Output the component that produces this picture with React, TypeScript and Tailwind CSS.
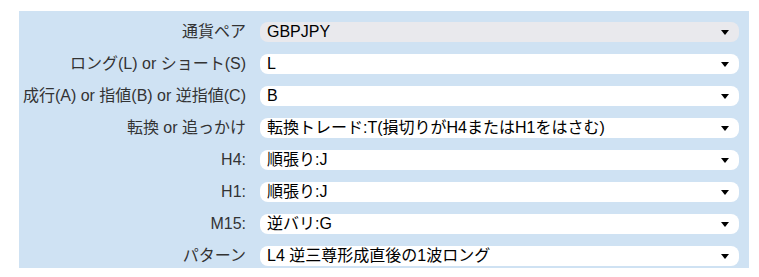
import { ChangeEvent, useState } from 'react'

type Field = {
  label: string
  value: string
  disabled?: boolean
}

const initialFields: Field[] = [
  { label: '通貨ペア', value: 'GBPJPY', disabled: true },
  { label: 'ロング(L) or ショート(S)', value: 'L' },
  { label: '成行(A) or 指値(B) or 逆指値(C)', value: 'B' },
  { label: '転換 or 追っかけ', value: '転換トレード:T(損切りがH4またはH1をはさむ)' },
  { label: 'H4:', value: '順張り:J' },
  { label: 'H1:', value: '順張り:J' },
  { label: 'M15:', value: '逆バリ:G' },
  { label: 'パターン', value: 'L4 逆三尊形成直後の1波ロング' },
]

function Arrow() {
  return (
    <svg width="8" height="5" viewBox="0 0 8 5" className="pointer-events-none">
      <path d="M0 0 H8 L4 5 Z" fill="#000" />
    </svg>
  )
}

function SelectRow({ field, onChange }: { field: Field; onChange: (v: string) => void }) {
  return (
    <div className="flex h-5 items-center">
      <label className="w-[227px] shrink-0 whitespace-nowrap text-right text-[#333]">
        {field.label}
      </label>
      <div
        className={
          field.disabled
            ? 'relative ml-[14px] flex h-5 flex-1 items-center rounded-lg bg-[#e9e9ed] pl-[7px] pr-[10px]'
            : 'relative ml-[14px] flex h-5 flex-1 items-center rounded-lg bg-white pl-[7px] pr-[10px]'
        }
      >
        <select
          value={field.value}
          disabled={field.disabled}
          onChange={(e: ChangeEvent<HTMLSelectElement>) => onChange(e.target.value)}
          className="absolute inset-0 cursor-pointer appearance-none opacity-0"
        >
          <option value={field.value}>{field.value}</option>
        </select>
        <span className="flex-1 truncate text-black">{field.value}</span>
        <Arrow />
      </div>
    </div>
  )
}

export default function App() {
  const [fields, setFields] = useState(initialFields)

  return (
    <div
      className="min-h-screen bg-white pl-[19px] pr-[10px] pt-[11px] text-base leading-5"
      style={{ fontFamily: '"Liberation Sans", "Noto Sans CJK JP", sans-serif' }}
    >
      <div className="flex flex-col gap-3 bg-[#cfe2f3] pb-[2px] pr-[10px] pt-[11px]">
        {fields.map((f, i) => (
          <SelectRow
            key={i}
            field={f}
            onChange={(v) => setFields(fields.map((x, j) => (j === i ? { ...x, value: v } : x)))}
          />
        ))}
      </div>
    </div>
  )
}
